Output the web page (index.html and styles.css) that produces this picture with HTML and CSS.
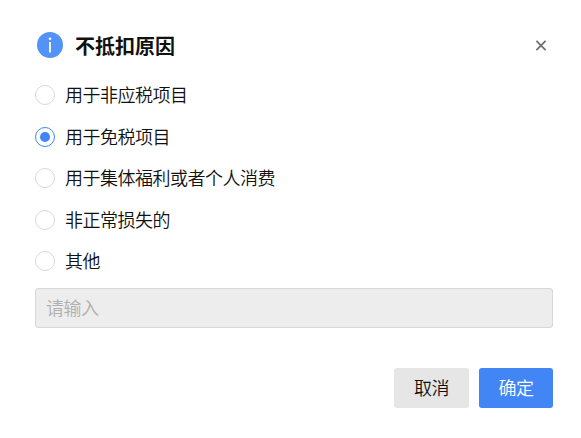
FILE: index.html
```html
<!DOCTYPE html>
<html lang="zh-CN">
<head>
<meta charset="utf-8">
<title>不抵扣原因</title>
<link rel="stylesheet" href="styles.css">
</head>
<body>
<section class="dialog" role="dialog" aria-labelledby="title">
  <header class="header">
    <svg class="info" viewBox="0 0 26 26" aria-hidden="true"><circle cx="13" cy="13" r="13"/><circle class="mark" cx="13" cy="6.7" r="1.3"/><rect class="mark" x="12.1" y="10" width="1.8" height="10.5"/></svg>
    <h1 class="title" id="title">不抵扣原因</h1>
    <svg class="close" viewBox="0 0 12 12" aria-hidden="true"><path d="M1.4 1.9l9.2 9.2M10.6 1.9l-9.2 9.2"/></svg>
  </header>
  <div class="options">
    <label class="option"><input class="radio" type="radio" name="reason"><span class="text">用于非应税项目</span></label>
    <label class="option"><input class="radio" type="radio" name="reason" checked><span class="text">用于免税项目</span></label>
    <label class="option"><input class="radio" type="radio" name="reason"><span class="text">用于集体福利或者个人消费</span></label>
    <label class="option"><input class="radio" type="radio" name="reason"><span class="text">非正常损失的</span></label>
    <label class="option"><input class="radio" type="radio" name="reason"><span class="text">其他</span></label>
  </div>
  <input class="field" type="text" placeholder="请输入" disabled>
  <footer class="footer">
    <button class="button">取消</button>
    <button class="button primary">确定</button>
  </footer>
</section>
</body>
</html>
```
FILE: styles.css
```css
* { box-sizing: border-box; }
body { margin: 0; background: #fff; color: #111; font-family: "Noto Sans CJK SC", sans-serif; font-weight: 350; }
.dialog { height: 438px; padding: 30px 28px 30px 35px; }
.header { display: flex; align-items: center; height: 30px; padding: 0 6px 0 2px; }
.info { width: 26px; height: 26px; fill: #5392f6; }
.info .mark { fill: #fff; }
.title { margin: 0 0 0 12px; padding-top: 2px; font-size: 20px; line-height: 30px; font-weight: 700; }
.close { width: 12px; height: 12px; margin-left: auto; fill: none; stroke: #707070; stroke-width: 1.8; }
.options { display: grid; grid-auto-rows: 41.5px; margin-top: 14.3px; }
.option { display: flex; align-items: center; gap: 10px; font-size: 18px; letter-spacing: -0.5px; }
.text { padding-bottom: 2px; }
.radio { appearance: none; display: grid; place-items: center; width: 20px; height: 20px; margin: 0; border: 1px solid #d9d9d9; border-radius: 50%; background: #fff; }
.radio:checked { border-color: #4285f4; }
.radio:checked::before { content: ""; width: 10px; height: 10px; border-radius: 50%; background: #4285f4; }
.field { display: block; width: 518px; height: 40px; margin-top: 6.2px; padding: 0 10px 2px; border: 1px solid #d9d9d9; border-radius: 3px; background: #ededed; font: inherit; font-size: 18px; letter-spacing: -0.5px; }
.field::placeholder { color: #b0b0b0; }
.footer { display: flex; justify-content: flex-end; gap: 10px; margin-top: 40px; }
.button { width: 75px; height: 40px; padding: 0 0 2px; border: 0; border-radius: 3px; background: #e6e6e6; color: #111; font: inherit; font-size: 18px; letter-spacing: -0.5px; }
.primary { width: 74px; background: #4285f4; color: #fff; }
```
